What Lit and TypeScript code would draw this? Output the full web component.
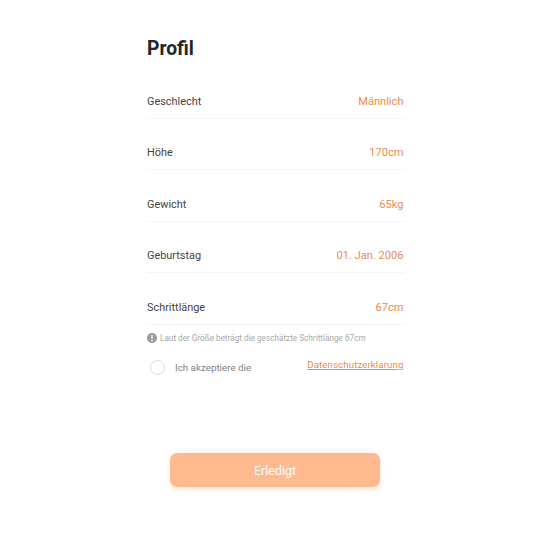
import { LitElement, html, css } from "lit";
import { customElement } from "lit/decorators.js";

const rows: [string, string][] = [
  ["Geschlecht", "Männlich"],
  ["Höhe", "170cm"],
  ["Gewicht", "65kg"],
  ["Geburtstag", "01. Jan. 2006"],
  ["Schrittlänge", "67cm"],
];

@customElement("app-root")
export class AppRoot extends LitElement {
  static styles = css`
    :host {
      display: block;
      width: 550px;
      height: 550px;
      background: #fff;
      font-family: Roboto, "Liberation Sans", sans-serif;
      color: #333;
      overflow: hidden;
    }
    .page {
      display: flex;
      flex-direction: column;
      width: 256.5px;
      margin-left: 147px;
      padding-top: 36px;
    }
    h1 {
      margin: 0 0 6px;
      font-size: 19.3px;
      line-height: 25px;
      font-weight: 700;
      color: #262626;
    }
    .row {
      display: flex;
      justify-content: space-between;
      align-items: flex-start;
      height: 51.5px;
      box-sizing: border-box;
      padding-top: 27.5px;
      line-height: 14px;
      border-bottom: 1px solid #f5f5f5;
      font-size: 10.9px;
      color: #444;
    }
    .val {
      color: #e88c4e;
      font-size: 11.1px;
    }
    .hint {
      display: flex;
      align-items: center;
      gap: 3px;
      margin-top: 8px;
      font-size: 8.2px;
      line-height: 11px;
      color: #a8a8a8;
    }
    .hint svg {
      display: block;
      flex: none;
    }
    .accept {
      display: flex;
      margin-top: 13px;
      height: 22px;
    }
    .radio {
      width: 15px;
      height: 15px;
      box-sizing: border-box;
      border: 1.5px solid #dcdcdc;
      border-radius: 50%;
      margin: 3.5px 0 0 3px;
    }
    .acc-text {
      margin: 4.5px 0 0 10px;
      font-size: 9.8px;
      line-height: 14px;
      color: #808080;
    }
    .link {
      margin: 1px 0 0 auto;
      font-size: 9.7px;
      line-height: 13px;
      letter-spacing: 0.1px;
      color: #e88c4e;
      text-decoration: underline;
      text-underline-offset: 1px;
    }
    .btn-wrap {
      display: flex;
      justify-content: center;
      margin-top: 74px;
      width: 550px;
      margin-left: -147px;
    }
    .btn {
      width: 210.5px;
      height: 34px;
      padding: 1px 0 0;
      border: 0;
      border-radius: 7px;
      background: #ffb98f;
      color: #fff;
      font: 400 12.5px Roboto, "Liberation Sans", sans-serif;
      box-shadow: 0 2px 6px rgba(255, 184, 142, 0.35);
    }
  `;

  render() {
    return html`
      <div class="page">
        <h1>Profil</h1>
        ${rows.map(
          ([k, v]) => html`<div class="row"><span>${k}</span><span class="val">${v}</span></div>`
        )}
        <div class="hint">
          <svg width="10" height="10" viewBox="0 0 10 10">
            <circle cx="5" cy="5" r="5" fill="#9a9a9a"></circle>
            <rect x="4.3" y="2" width="1.4" height="3.8" fill="#fff"></rect>
            <rect x="4.3" y="6.6" width="1.4" height="1.4" fill="#fff"></rect>
          </svg>
          <span>Laut der Größe beträgt die geschätzte Schrittlänge 67cm</span>
        </div>
        <div class="accept">
          <div class="radio"></div>
          <span class="acc-text">Ich akzeptiere die</span>
          <span class="link">Datenschutzerklarung</span>
        </div>
        <div class="btn-wrap"><button class="btn">Erledigt</button></div>
      </div>
    `;
  }
}
